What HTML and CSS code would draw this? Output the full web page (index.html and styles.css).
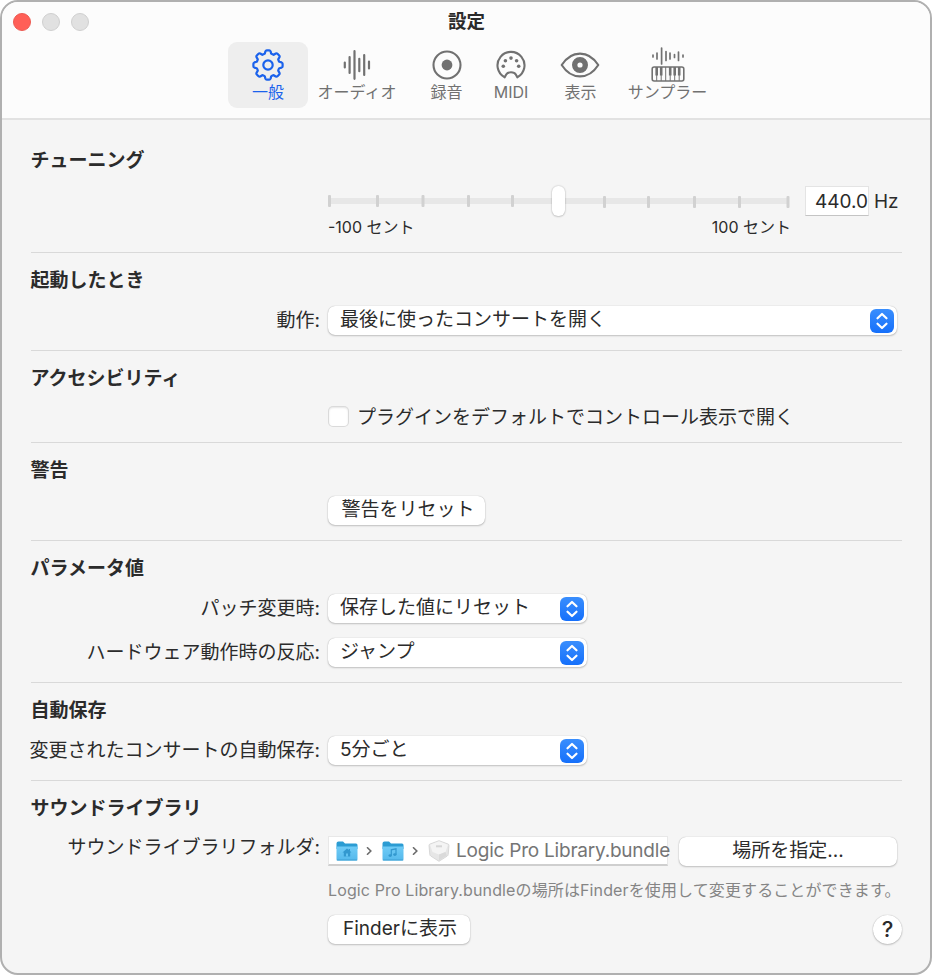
FILE: index.html
```html
<!DOCTYPE html>
<html lang="ja">
<head>
<meta charset="UTF-8">
<meta name="viewport" content="width=device-width, initial-scale=1.0">
<title>設定</title>
<link rel="stylesheet" href="styles.css">
</head>
<body>
<svg width="0" height="0" class="defs">
  <defs>
    <linearGradient id="folderFill" x1="0" y1="0" x2="0" y2="1">
      <stop offset="0" stop-color="#6fcbf6"/>
      <stop offset="1" stop-color="#55b9ec"/>
    </linearGradient>
    <symbol id="updown" viewBox="0 0 24 24">
      <path d="M7.5 9.3 12 5l4.500 4.300M7.500 14.700 12 19l4.500-4.300" fill="none" stroke="#fff" stroke-width="2.200" stroke-linecap="round" stroke-linejoin="round"/>
    </symbol>
    <symbol id="folder" viewBox="0 0 22 20">
      <path d="M.5 2.500Q.500.500 2.500.500H7l2 2h11q1.500 0 1.500 1.500v4H.500z" fill="#2b9cd3"/>
      <path d="M.5 5.500h21v12.500q0 1.500-1.500 1.500H2Q.500 19.500.500 18z" fill="url(#folderFill)"/>
      <path d="M.8 19h20.400" stroke="#3d9fd2" stroke-width="1"/>
    </symbol>
  </defs>
</svg>

<div class="window">
  <header class="toolbar">
    <div class="titlebar">
      <div class="lights">
        <span class="light close"></span>
        <span class="light"></span>
        <span class="light"></span>
      </div>
      <h1>設定</h1>
    </div>
    <nav class="tabs">
      <a class="tab tab-general active">
        <svg width="34" height="34" viewBox="-17 -17 34 34" fill="none" stroke="currentColor" stroke-width="2.200" stroke-linejoin="round">
          <path d="M-3.2-11.300-2.600-13.600Q-2.200-14.600-1.200-14.600H1.200Q2.200-14.600 2.600-13.600L3.200-11.300Q4.500-10.400 5.700-10.200L7.800-11.500Q8.800-11.900 9.500-11.200L11.200-9.500Q11.900-8.800 11.500-7.800L10.200-5.700Q10.400-4.500 11.300-3.200L13.600-2.600Q14.600-2.200 14.600-1.200V1.200Q14.600 2.200 13.600 2.600L11.300 3.200Q10.400 4.500 10.200 5.700L11.500 7.800Q11.900 8.800 11.200 9.500L9.500 11.200Q8.800 11.900 7.800 11.500L5.700 10.200Q4.500 10.400 3.200 11.300L2.600 13.600Q2.200 14.600 1.200 14.600H-1.200Q-2.200 14.600-2.600 13.600L-3.200 11.300Q-4.500 10.400-5.700 10.200L-7.800 11.500Q-8.800 11.900-9.500 11.200L-11.200 9.500Q-11.900 8.800-11.500 7.800L-10.200 5.700Q-10.400 4.500-11.300 3.200L-13.600 2.600Q-14.600 2.200-14.600 1.200V-1.200Q-14.600-2.200-13.600-2.600L-11.300-3.200Q-10.400-4.500-10.200-5.700L-11.500-7.800Q-11.900-8.800-11.200-9.500L-9.500-11.200Q-8.800-11.900-7.800-11.500L-5.700-10.200Q-4.500-10.400-3.200-11.300Z"/>
          <circle r="4.700"/>
        </svg>
        <span>一般</span>
      </a>
      <a class="tab tab-audio">
        <svg width="34" height="34" viewBox="-17 -17 34 34" stroke="currentColor" stroke-width="2.200" stroke-linecap="round">
          <path d="M-12.200-2.500v5M-7.400-8v16M-2.500-13.800v27.600M2.300-6.200v12.400M7.200-10v20M12-3.500v7"/>
        </svg>
        <span>オーディオ</span>
      </a>
      <a class="tab tab-record">
        <svg width="34" height="34" viewBox="-17 -17 34 34" fill="none" stroke="currentColor" stroke-width="2.100">
          <circle r="13.500"/>
          <circle r="5.400" fill="currentColor" stroke="none"/>
        </svg>
        <span>録音</span>
      </a>
      <a class="tab tab-midi">
        <svg width="34" height="34" viewBox="-17 -17 34 34">
          <path d="M-6.300 12.300A13.500 13.500 0 1 1 6.300 12.300L4.800 9.500Q3.600 7.300 0 7.300T-4.800 9.500Z" fill="none" stroke="currentColor" stroke-width="2.100" stroke-linejoin="round"/>
          <g fill="currentColor">
            <circle cx="-7.700" cy="1.200" r="1.800"/>
            <circle cx="-5.600" cy="-4.300" r="1.800"/>
            <circle cx="0" cy="-6.900" r="1.800"/>
            <circle cx="5.600" cy="-4.300" r="1.800"/>
            <circle cx="7.700" cy="1.200" r="1.800"/>
          </g>
        </svg>
        <span>MIDI</span>
      </a>
      <a class="tab tab-view">
        <svg width="42" height="34" viewBox="-20 -17 42 34">
          <path d="M-18.300 0C-13.500-7.500-7.500-11.400 0-11.400S13.500-7.500 18.300 0C13.500 7.500 7.500 11.400 0 11.400S-13.500 7.500-18.300 0Z" fill="none" stroke="currentColor" stroke-width="2.100" stroke-linejoin="round"/>
          <circle r="5.300" fill="none" stroke="currentColor" stroke-width="5.400"/>
        </svg>
        <span>表示</span>
      </a>
      <a class="tab tab-sampler">
        <svg width="38" height="36" viewBox="0 0 38 36" fill="none" stroke="currentColor">
          <path d="M4 8v2M8 6v6M12.600 1v16M17 4.500v9M21 6v6M25.500 7.500v3M29.500 5v8.500M34 8v2" stroke-width="1.700" stroke-linecap="round"/>
          <rect x="3.200" y="20" width="31.600" height="14" rx="2" stroke-width="1.600"/>
          <path d="M7.700 28v6M12.200 28v6M16.700 20v14M21.200 28v6M25.700 28v6M30.200 28v6" stroke-width="1"/>
          <path d="M7.700 20v8.500M12.200 20v8.500M21.200 20v8.500M25.700 20v8.500M30.200 20v8.500" stroke-width="2.600"/>
        </svg>
        <span>サンプラー</span>
      </a>
    </nav>
  </header>

  <main>
    <section class="tuning">
      <h2>チューニング</h2>
      <div class="row">
        <div class="controls">
          <div class="slider">
            <svg width="464" height="30" viewBox="1 0 464 30">
              <rect x="1" y="12" width="461" height="6" fill="#e7e7e7"/>
              <g fill="#d1d1d1">
                <rect x="1" y="9" width="3" height="12" rx="1"/>
                <rect x="49" y="9" width="3" height="12" rx="1"/>
                <rect x="94.500" y="9" width="3" height="12" rx="1"/>
                <rect x="140" y="9" width="3" height="12" rx="1"/>
                <rect x="184" y="9" width="3" height="12" rx="1"/>
                <rect x="276" y="10" width="3" height="12" rx="1"/>
                <rect x="320" y="10" width="3" height="12" rx="1"/>
                <rect x="366" y="10" width="3" height="12" rx="1"/>
                <rect x="411" y="10" width="3" height="12" rx="1"/>
                <rect x="459.500" y="10" width="3" height="12" rx="1"/>
              </g>
            </svg>
            <span class="thumb"></span>
            <div class="scale"><span>-100 セント</span><span>100 セント</span></div>
          </div>
          <span class="field">440.0</span>
          <span class="unit">Hz</span>
        </div>
      </div>
    </section>

    <section>
      <h2>起動したとき</h2>
      <div class="row">
        <label>動作:</label>
        <div class="select wide"><span>最後に使ったコンサートを開く</span><svg class="arrows"><use href="#updown"/></svg></div>
      </div>
    </section>

    <section>
      <h2>アクセシビリティ</h2>
      <div class="row short">
        <div class="controls check">
          <span class="checkbox"></span>
          <span>プラグインをデフォルトでコントロール表示で開く</span>
        </div>
      </div>
    </section>

    <section>
      <h2>警告</h2>
      <div class="row">
        <button class="reset">警告をリセット</button>
      </div>
    </section>

    <section>
      <h2>パラメータ値</h2>
      <div class="row">
        <label>パッチ変更時:</label>
        <div class="select"><span>保存した値にリセット</span><svg class="arrows"><use href="#updown"/></svg></div>
      </div>
      <div class="row">
        <label>ハードウェア動作時の反応:</label>
        <div class="select"><span>ジャンプ</span><svg class="arrows"><use href="#updown"/></svg></div>
      </div>
    </section>

    <section>
      <h2>自動保存</h2>
      <div class="row">
        <label>変更されたコンサートの自動保存:</label>
        <div class="select"><span>5分ごと</span><svg class="arrows"><use href="#updown"/></svg></div>
      </div>
    </section>

    <section class="library">
      <h2>サウンドライブラリ</h2>
      <div class="row">
        <label>サウンドライブラリフォルダ:</label>
        <div class="controls">
          <div class="path">
            <svg width="22" height="20" viewBox="0 0 22 20">
              <use href="#folder"/>
              <path d="M11 7.500 6.500 11.500h1.300v4h6.400v-4h1.300L14 10V8h-1.200v1z" fill="#3298cf"/>
              <path d="M10 12.500h2v3h-2z" fill="#62c2f1"/>
            </svg>
            <svg class="chevron" width="6" height="8" viewBox="0 0 6 8"><path d="m1 .3 3.800 3.700L1 7.700"/></svg>
            <svg width="22" height="20" viewBox="0 0 22 20">
              <use href="#folder"/>
              <path d="M9.300 14.500V8.800l4.700-1v5.700" fill="none" stroke="#3298cf" stroke-width="1.200"/>
              <ellipse cx="8.200" cy="14.600" rx="1.700" ry="1.300" fill="#3298cf"/>
              <ellipse cx="12.900" cy="13.600" rx="1.700" ry="1.300" fill="#3298cf"/>
            </svg>
            <svg class="chevron" width="6" height="8" viewBox="0 0 6 8"><path d="m1 .3 3.800 3.700L1 7.700"/></svg>
            <svg class="bundle" width="22" height="22" viewBox="0 0 22 22">
              <path d="M11 .7 20 4q1 .4 1 1.500l-.8 9q-.1 1-1 1.600L11 21.300l-8.200-5.200q-.9-.6-1-1.600L1 5.500Q1 4.400 2 4z" fill="#e6e6e6" stroke="#d0d0d0" stroke-width=".8"/>
              <path d="M11 1.200 20 4.700 17.500 12 11 14.500 4.500 12 2 4.700z" fill="#f4f4f4"/>
              <path d="M11 14.500v6.100l7.800-5-1.300-3.600" fill="#dadada"/>
              <path d="M8 6.300h6" stroke="#d6d6d6" stroke-width="2"/>
            </svg>
            <span>Logic Pro Library.bundle</span>
          </div>
          <button class="choose">場所を指定...</button>
        </div>
      </div>
      <p class="hint">Logic Pro Library.bundleの場所はFinderを使用して変更することができます。</p>
      <div class="footer">
        <button class="finder">Finderに表示</button>
        <button class="help">?</button>
      </div>
    </section>
  </main>
</div>
</body>
</html>
```
FILE: styles.css
```css
* {
  box-sizing: border-box;
}

body {
  margin: 0;
  background-color: #fff;
  font-family: Inter, "Noto Sans CJK JP", sans-serif;
  font-size: 19px;
  line-height: 28px;
  color: #2b2b2b;
}

.defs {
  display: block;
}

.window {
  width: 932px;
  height: 975px;
  border: 2px solid #b0b0b0;
  border-radius: 18px;
  background-color: #f5f5f5;
  overflow: hidden;
}

.toolbar {
  height: 118px;
  background-color: #fcfcfc;
  border-bottom: 2px solid #e2e2e2;
}

.titlebar {
  display: grid;
  grid-template-columns: 1fr auto 1fr;
  align-items: center;
  height: 40px;
  padding-left: 11px;
}

.lights {
  display: flex;
  gap: 11px;
}

.light {
  width: 18px;
  height: 18px;
  border: 1px solid #cfcfcf;
  border-radius: 50%;
  background-color: #e1e1e1;
}

.light.close {
  border-color: #ec5a52;
  background-color: #ff5f57;
}

h1 {
  margin: 0 10px 3px 0;
  font-size: 18.5px;
  font-weight: 600;
  line-height: 26px;
}

.tabs {
  display: flex;
  padding-left: 226px;
}

.tab {
  display: flex;
  flex-direction: column;
  align-items: center;
  height: 66px;
  padding-top: 6px;
  border-radius: 9px;
  font-size: 16px;
  line-height: 20px;
  color: #717171;
  white-space: nowrap;
}

.tab svg {
  display: block;
  flex: none;
}

.tab.active {
  background-color: #eee;
  color: #1b62ec;
}

.tab-general {
  width: 80px;
}

.tab-audio {
  width: 98px;
}

.tab-record {
  width: 81px;
}

.tab-midi {
  width: 48px;
}

.tab-view {
  width: 91px;
}

.tab-sampler {
  width: 83px;
}

.tab-sampler svg {
  margin: -1px 0;
}

main {
  padding: 0 28px 0 29px;
}

section {
  padding: 14px 0;
  border-bottom: 1px solid #d9d9d9;
}

section.tuning {
  padding: 27px 0 13px;
}

section.library {
  padding-bottom: 0;
  border-bottom: none;
}

h2 {
  margin: 0 0 11px -0.5px;
  font-size: 19px;
  font-weight: 700;
  line-height: 28px;
}

.row {
  display: grid;
  grid-template-columns: 289px 1fr;
  column-gap: 8px;
  align-items: center;
  height: 30px;
}

.row + .row {
  margin-top: 14px;
}

.row.short {
  height: 24px;
}

.row > :not(label) {
  grid-column: 2;
}

label {
  justify-self: end;
  white-space: nowrap;
  line-height: 30px;
}

.controls {
  display: flex;
  align-items: center;
}

.tuning .row {
  height: 53px;
  align-items: start;
}

.tuning .controls {
  align-items: flex-start;
}

.slider {
  position: relative;
  width: 463px;
}

.slider svg {
  display: block;
}

.thumb {
  position: absolute;
  left: 224px;
  top: 0;
  width: 13px;
  height: 30px;
  border-radius: 6px;
  background-color: #fff;
  box-shadow: 0 0 2px rgba(0, 0, 0, 0.25), 0 1px 2px rgba(0, 0, 0, 0.12);
}

.scale {
  display: flex;
  justify-content: space-between;
  font-size: 16px;
  line-height: 22px;
}

.field {
  width: 64px;
  height: 30px;
  margin: 0 5px 0 14px;
  border: 1px solid #e4e4e4;
  border-bottom-color: #c4c4c4;
  background-color: #fff;
  text-align: right;
  line-height: 29px;
}

.unit {
  line-height: 31px;
}

.select {
  display: flex;
  justify-content: space-between;
  align-items: center;
  width: 259px;
  height: 29px;
  padding: 0 3px 0 12px;
  border-radius: 7px;
  background-color: #fff;
  box-shadow: 0 0 1px rgba(0, 0, 0, 0.3), 0 1px 2px rgba(0, 0, 0, 0.2);
}

.select span {
  line-height: 26px;
  padding-bottom: 2px;
}

.row > .select,
.row > .reset {
  margin-bottom: 1px;
}

.select.wide {
  width: 569px;
}

.arrows {
  width: 24px;
  height: 24px;
  border-radius: 6px;
  background: linear-gradient(#3a8efd, #1670fb);
}

.check {
  padding-bottom: 4px;
}

.checkbox {
  width: 19px;
  height: 19px;
  margin: 0 9px 4px 1px;
  border-radius: 4px;
  background-color: #fff;
  box-shadow: 0 0 0 1px #dadada, inset 0 1px 2px rgba(0, 0, 0, 0.1);
}

button {
  height: 29px;
  padding: 0 0 1px;
  border: none;
  border-radius: 7px;
  background-color: #fff;
  box-shadow: 0 0 1px rgba(0, 0, 0, 0.3), 0 1px 2px rgba(0, 0, 0, 0.2);
  font: inherit;
  color: #2b2b2b;
}

.reset {
  width: 157px;
  padding-left: 3px;
}

.library label {
  margin-top: -4px;
}

.library .controls {
  margin-top: 2px;
}

.path {
  display: flex;
  align-items: center;
  width: 340px;
  height: 30px;
  padding-left: 7px;
  border: 1px solid #e8e8e8;
  border-bottom: 2px solid #cfcfcf;
  background-color: #fff;
  color: #757575;
  white-space: nowrap;
}

.path span {
  letter-spacing: -0.22px;
}

.path svg {
  flex: none;
}

.path .chevron {
  margin: 0 10px 0 8px;
  fill: none;
  stroke: #6b6b6b;
  stroke-width: 1.6;
}

.path .bundle {
  margin-right: 6px;
}

.choose {
  width: 218px;
  margin-left: 11px;
}

.hint {
  margin: 14px 0 13px 297px;
  font-size: 16px;
  line-height: 24px;
  letter-spacing: 0.12px;
  color: #858585;
  white-space: nowrap;
}

.footer {
  display: flex;
  justify-content: space-between;
  margin-left: 297px;
}

.finder {
  width: 142px;
  padding-left: 2px;
}

.help {
  width: 29px;
  border-radius: 50%;
  font-size: 22px;
  font-weight: 500;
}
```
